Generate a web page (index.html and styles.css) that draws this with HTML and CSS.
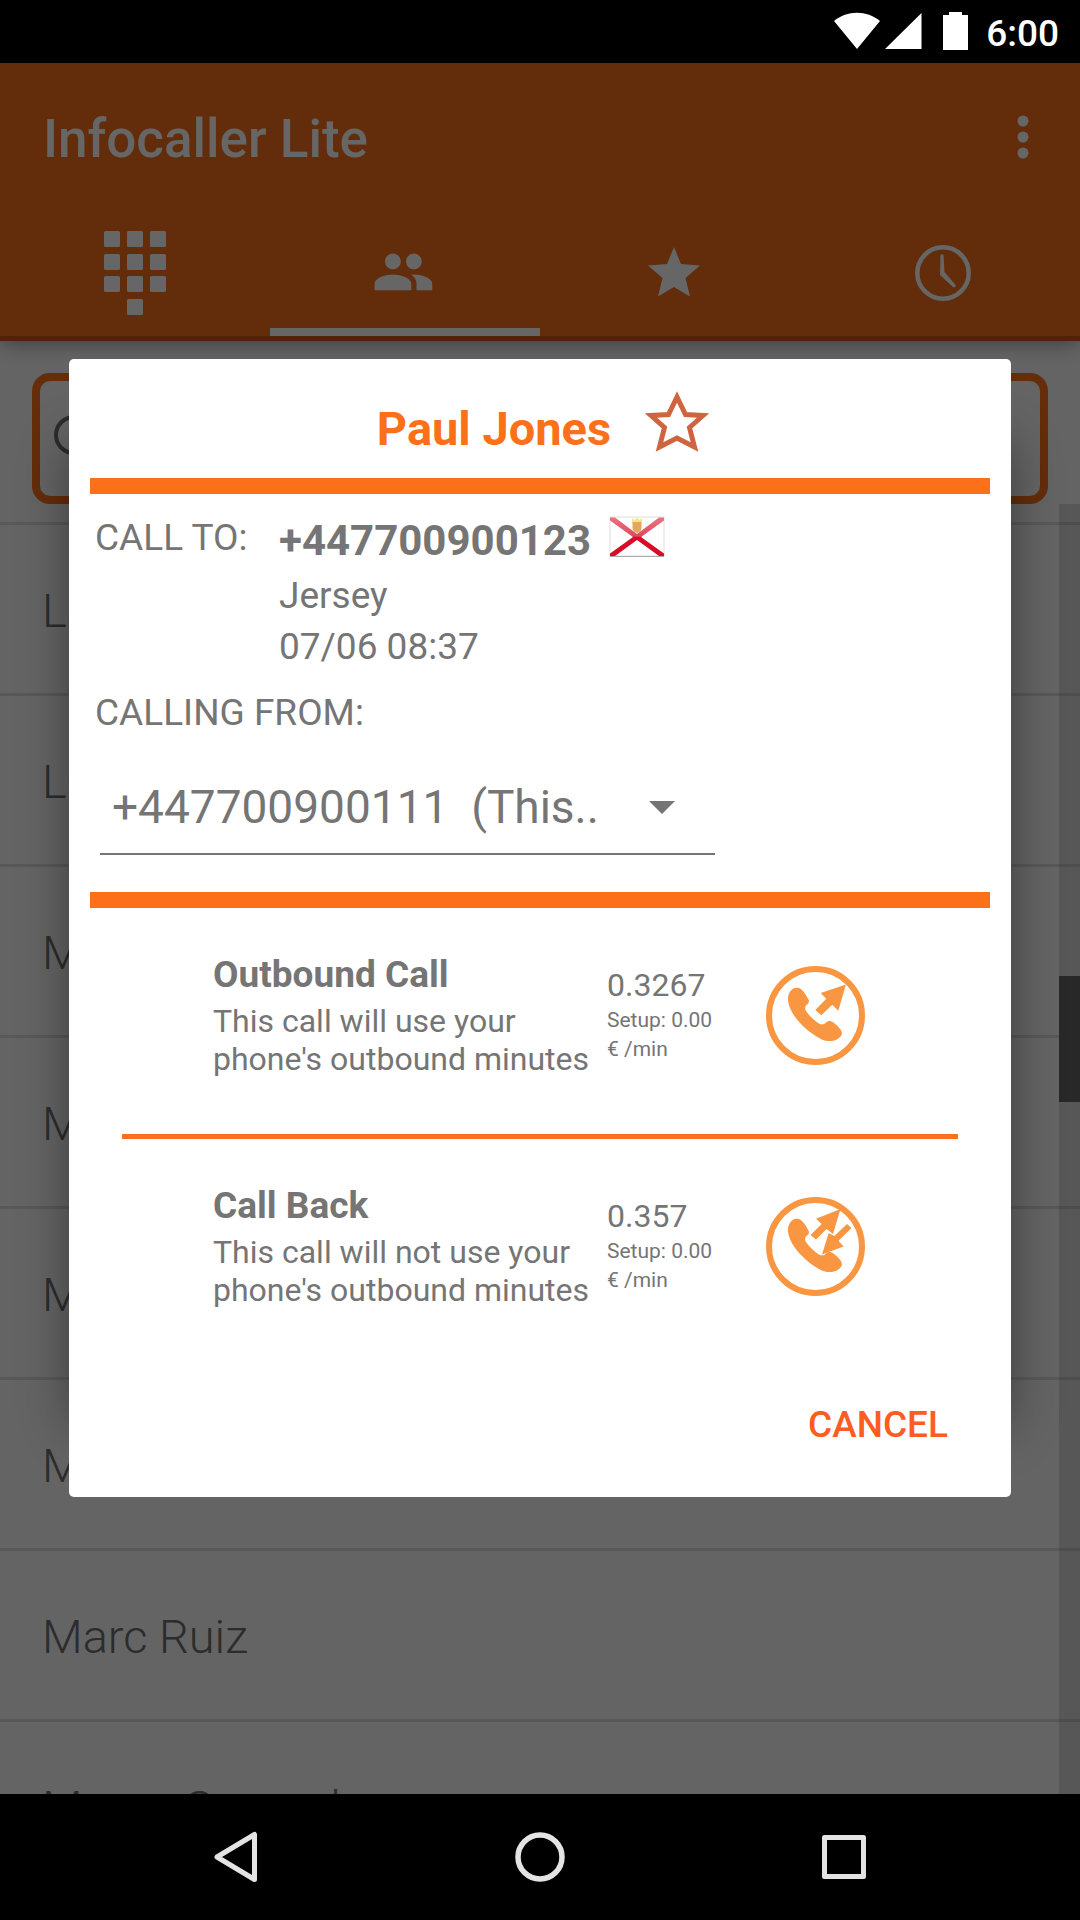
FILE: index.html
```html
<!DOCTYPE html>
<html lang="en">
<head>
<meta charset="utf-8">
<meta name="viewport" content="width=device-width, initial-scale=1">
<title>Infocaller Lite</title>
<link rel="stylesheet" href="styles.css">
</head>
<body>
<div class="screen">
  <div class="status-bar">
    <svg class="status-signal" width="88" height="38" viewBox="0 0 88 38" aria-hidden="true">
      <path fill="#fff" d="M0 9C13-2 33-2 46 9L23 37z M87.500 1V37H51z"/>
    </svg>
    <svg class="status-battery" width="25" height="38" viewBox="0 0 25 38" aria-hidden="true">
      <path fill="#fff" d="M6 0h13v3h6v35H0V3h6z"/>
    </svg>
    <span class="status-time">6:00</span>
  </div>

  <div class="app">
    <header class="app-bar">
      <div class="toolbar">
        <h1 class="app-title">Infocaller Lite</h1>
        <button class="icon-button" type="button" aria-label="More options">
          <svg width="12" height="44" viewBox="0 0 12 44" fill="#fff"><circle cx="6" cy="6" r="5.500"/><circle cx="6" cy="22" r="5.500"/><circle cx="6" cy="38" r="5.500"/></svg>
        </button>
      </div>
      <nav class="tabs">
        <button class="tab" type="button" aria-label="Dialpad">
          <svg width="62" height="84" viewBox="0 0 62 84" fill="#fff">
            <rect width="16" height="16" rx="1.500"/><rect x="23" width="16" height="16" rx="1.500"/><rect x="46" width="16" height="16" rx="1.500"/>
            <rect y="23" width="16" height="16" rx="1.500"/><rect x="23" y="23" width="16" height="16" rx="1.500"/><rect x="46" y="23" width="16" height="16" rx="1.500"/>
            <rect y="45" width="16" height="16" rx="1.500"/><rect x="23" y="45" width="16" height="16" rx="1.500"/><rect x="46" y="45" width="16" height="16" rx="1.500"/>
            <rect x="23" y="68" width="16" height="16" rx="1.500"/>
          </svg>
        </button>
        <button class="tab tab-active" type="button" aria-label="Contacts">
          <svg width="64" height="64" viewBox="0.4 0.2 24.400 24.400" fill="#fff"><path d="M16 11c1.660 0 2.990-1.340 2.990-3S17.660 5 16 5c-1.660 0-3 1.340-3 3s1.340 3 3 3zm-8 0c1.660 0 2.990-1.340 2.990-3S9.660 5 8 5C6.340 5 5 6.340 5 8s1.340 3 3 3zm0 2c-2.330 0-7 1.170-7 3.500V19h14v-2.500c0-2.330-4.670-3.500-7-3.500zm8 0c-.29 0-.62.02-.97.05 1.160.84 1.970 1.970 1.970 3.450V19h6v-2.500c0-2.330-4.670-3.500-7-3.500z"/></svg>
        </button>
        <button class="tab" type="button" aria-label="Favourites">
          <svg width="54" height="52" viewBox="0 0 54 52" fill="#fff"><path d="M26 0l7 17 19 1.500L37.500 31 42 49.500 26 40 10 49.500 14.500 31 0 18.500 19 17z"/></svg>
        </button>
        <button class="tab" type="button" aria-label="Recent calls">
          <svg width="60" height="56" viewBox="0 0 60 56" fill="none" stroke="#fff"><circle cx="28" cy="28" r="25.700" stroke-width="4.500"/><path fill="#fff" stroke="none" d="M25.500 10q1.500-1.500 3 0l1 17L41 40.500q-.5 2-2.500 2L25 30z"/></svg>
        </button>
      </nav>
    </header>

    <main class="contacts">
      <div class="search">
        <svg width="48" height="48" viewBox="0 0 48 48" fill="none" stroke="#6e6e6e" stroke-width="4"><circle cx="22" cy="20" r="18"/><path d="M35 33l12 12"/></svg>
        <input class="search-input" type="search" aria-label="Search contacts">
      </div>
      <div class="list-area">
        <ul class="contact-list">
          <li>Laura Diaz</li>
          <li>Luis Perez</li>
          <li>Maria Sanz</li>
          <li>Manuel Gil</li>
          <li>Marta Vega</li>
          <li>Mario Rey</li>
          <li>Marc Ruiz</li>
          <li>Marco Samuel</li>
        </ul>
        <div class="scroll-track"><div class="scroll-thumb"></div></div>
      </div>
    </main>

    <div class="scrim">
      <div class="dialog-frame">
        <section class="dialog" role="dialog" aria-labelledby="contact-name">
          <header class="dialog-header">
            <h2 class="contact-name" id="contact-name">Paul Jones</h2>
            <button class="icon-button" type="button" aria-label="Add to favourites">
              <svg width="64" height="61" viewBox="0 0 64 61" fill="none" stroke="#ce6540" stroke-width="5"><path d="M32 6L40.500 23.500 58 24.500 44.500 36.500 49.500 56 32 47 14.500 56 19.500 36.500 6 24.500 23.500 23.500z"/></svg>
            </button>
          </header>

          <div class="details">
            <div class="call-to">
              <span class="label">CALL TO:</span>
              <div class="callee">
                <div class="number-row">
                  <strong class="number">+447700900123</strong>
                  <svg width="56" height="42" viewBox="0 0 56 42" role="img" aria-label="Flag of Jersey">
                    <defs><linearGradient id="gloss" x1="0" y1="0" x2="0" y2="1"><stop offset="0" stop-color="#ea7482"/><stop offset=".48" stop-color="#e04a5e"/><stop offset=".52" stop-color="#d80c28"/><stop offset="1" stop-color="#d80c28"/></linearGradient></defs>
                    <rect x="1" y="1" width="54" height="39" fill="#fff" stroke="#ddd"/>
                    <path fill="url(#gloss)" d="M1 1.500h5L28 18 50 1.500h5v3L32 21 55 37.500v2.500h-5L28 24 6 40H1v-2.500L24 21 1 4.500z"/>
                    <path fill="#f7e58a" d="M23 2l2.500 2L28 1.500 30.500 4 33 2v5H23z"/>
                    <path fill="#e3a85c" d="M23.500 6h9v6q0 4-4.500 5-4.500-1-4.500-5z"/>
                    <path stroke="#aaa" d="M1 40.500h54"/>
                  </svg>
                </div>
                <p class="callee-line">Jersey</p>
                <p class="callee-line">07/06 08:37</p>
              </div>
            </div>
            <label class="label label-from" for="calling-from">CALLING FROM:</label>
            <div class="spinner">
              <select class="spinner-select" id="calling-from">
                <option>+447700900111&nbsp; (This..</option>
              </select>
              <svg class="spinner-arrow" width="26" height="13" viewBox="0 0 26 13" aria-hidden="true"><path fill="#757575" d="M0 0h26L13 13z"/></svg>
            </div>
          </div>

          <div class="options">
            <article class="option">
              <div class="option-text">
                <h3 class="option-title">Outbound Call</h3>
                <p class="option-desc">This call will use your phone's outbound minutes</p>
              </div>
              <div class="option-rate">
                <p class="rate">0.3267</p>
                <p class="rate-note">Setup: 0.00</p>
                <p class="rate-note">€ /min</p>
              </div>
              <button class="icon-button" type="button" aria-label="Start outbound call">
                <svg width="99" height="99" viewBox="0 0 99 99" fill="#f89642">
                  <circle cx="49.500" cy="49.500" r="46.500" fill="none" stroke="#f89642" stroke-width="6"/>
                  <path d="M29.700 21.700C25 22.500 21.500 28 22 34.500C23.500 49 40 65 54 72.500C58 75 63 75.500 67 74.800C71 74 75 71.500 76 67.500C75.500 63 71 59.500 67.500 56.500C65 54.500 62 54.200 60 56.500C58.500 58.500 55.500 59 53 57.500C48 54.500 43 49.500 40 45C38.500 42.500 39 40 41 38.500C43 37 43.500 35.500 42.500 33.500C40.500 30 38.500 26.500 35.500 23.500C34 22 32 21.400 29.700 21.700z"/>
                  <path d="M80 18.500L72.300 44.700 66.300 38.700 55.300 49.300 49.300 44 60.300 32.700 54.700 27z"/>
                </svg>
              </button>
            </article>
            <article class="option">
              <div class="option-text">
                <h3 class="option-title">Call Back</h3>
                <p class="option-desc">This call will not use your phone's outbound minutes</p>
              </div>
              <div class="option-rate">
                <p class="rate">0.357</p>
                <p class="rate-note">Setup: 0.00</p>
                <p class="rate-note">€ /min</p>
              </div>
              <button class="icon-button" type="button" aria-label="Request call back">
                <svg width="99" height="99" viewBox="0 0 99 99" fill="#f89642">
                  <circle cx="49.500" cy="49.500" r="46.500" fill="none" stroke="#f89642" stroke-width="6"/>
                  <path d="M29.700 21.700C25 22.500 21.500 28 22 34.500C23.500 49 40 65 54 72.500C58 75 63 75.500 67 74.800C71 74 75 71.500 76 67.500C75.500 63 71 59.500 67.500 56.500C65 54.500 62 54.200 60 56.500C58.500 58.500 55.500 59 53 57.500C48 54.500 43 49.500 40 45C38.500 42.500 39 40 41 38.500C43 37 43.500 35.500 42.500 33.500C40.500 30 38.500 26.500 35.500 23.500C34 22 32 21.400 29.700 21.700z"/>
                  <path d="M74.500 12L67 37 60.500 32 50 42.500 44.500 38 55.700 27 50 21.700z"/>
                  <path d="M81 27L85.500 31 72.500 43.700 77.500 49.500 56 57.500 62.700 36 68.300 39z"/>
                </svg>
              </button>
            </article>
          </div>

          <footer class="dialog-actions">
            <button class="cancel" type="button">CANCEL</button>
          </footer>
        </section>
      </div>
    </div>
  </div>

  <nav class="nav-bar">
    <button class="icon-button" type="button" aria-label="Back">
      <svg width="56" height="56" viewBox="0 0 56 56" fill="none" stroke="#e4e4e4" stroke-width="5" stroke-linejoin="round"><path d="M46.500 5.500v45L9 28z"/></svg>
    </button>
    <button class="icon-button" type="button" aria-label="Home">
      <svg width="56" height="56" viewBox="0 0 56 56" fill="none" stroke="#e4e4e4" stroke-width="5.500"><circle cx="28" cy="28" r="22"/></svg>
    </button>
    <button class="icon-button" type="button" aria-label="Recent apps">
      <svg width="56" height="56" viewBox="0 0 56 56" fill="none" stroke="#e4e4e4" stroke-width="5" stroke-linejoin="round"><path d="M8.500 8.500h39v39h-39z"/></svg>
    </button>
  </nav>
</div>
</body>
</html>
```
FILE: styles.css
```css
:root {
  --orange: #fc7019;
  --grey: #757575;
}

* {
  box-sizing: border-box;
}

body,
h1,
h2,
h3,
p,
ul {
  margin: 0;
}

body {
  font-family: Roboto, "Noto Sans", sans-serif;
  font-weight: 400;
  background: #000;
}

svg {
  display: block;
}

button,
input,
select {
  margin: 0;
  padding: 0;
  border: 0;
  background: none;
  font: inherit;
  color: inherit;
}

.icon-button {
  display: flex;
}

.screen {
  display: grid;
  grid-template-rows: 63px minmax(0, 1fr) 126px;
  height: 100vh;
  overflow: hidden;
}

/* System bars */

.status-bar {
  display: flex;
  align-items: flex-start;
  justify-content: flex-end;
  padding: 12px 21px 0 0;
  color: #fff;
}

.status-battery {
  margin-left: 21px;
}

.status-time {
  margin-left: 18px;
  font-size: 37px;
  line-height: 44px;
  font-weight: 500;
}

.nav-bar {
  display: flex;
  align-items: center;
  justify-content: center;
  gap: 248px;
}

/* App behind the dialog */

.app {
  position: relative;
  display: flex;
  flex-direction: column;
  overflow: hidden;
  background: #fafafa;
}

.app-bar {
  position: relative;
  flex: none;
  border-bottom: 5px solid #c8551a;
  background: #f76e19;
  box-shadow: 0 2px 20px rgba(0, 0, 0, 0.4);
}

.toolbar {
  display: flex;
  align-items: center;
  justify-content: space-between;
  height: 147px;
  padding: 0 51px 0 43px;
  color: #fff;
}

.app-title {
  padding-top: 4px;
  font-size: 53px;
  line-height: 62px;
  font-weight: 500;
}

.tabs {
  display: grid;
  grid-template-columns: repeat(4, 1fr);
  height: 126px;
}

.tab {
  display: flex;
  align-items: center;
  justify-content: center;
  border-top: 8px solid transparent;
  border-bottom: 8px solid transparent;
}

.tab-active {
  border-bottom-color: #fff;
}

.contacts {
  display: flex;
  flex: 1;
  flex-direction: column;
  min-height: 0;
}

.search {
  display: flex;
  flex: none;
  align-items: center;
  height: 131px;
  margin: 32px 32px 0;
  padding: 0 12px;
  border: 8px solid var(--orange);
  border-radius: 18px;
}

.search-input {
  flex: 1;
  font-size: 47px;
}

.list-area {
  display: grid;
  flex: 1;
  min-height: 0;
}

.contact-list {
  grid-area: 1 / 1;
  margin-top: 18px;
  padding: 0;
  list-style: none;
}

.contact-list li {
  height: 171px;
  padding: 58px 42px 0;
  border-top: 3px solid #ddd;
  color: #6e6e6e;
  font-size: 47px;
  line-height: 56px;
  font-weight: 300;
}

.scroll-track {
  grid-area: 1 / 1;
  justify-self: end;
  width: 21px;
  padding-top: 472px;
  background: rgba(0, 0, 0, 0.13);
}

.scroll-thumb {
  height: 126px;
  background: #646464;
}

/* Dialog */

.scrim {
  position: absolute;
  inset: 0;
  display: flex;
  align-items: center;
  padding: 0 69px 2px;
  background: rgba(0, 0, 0, 0.6);
}

.dialog-frame {
  position: relative;
  flex: 1;
}

.dialog-frame::before {
  content: "";
  position: absolute;
  inset: 84px 4px 72px;
  box-shadow: 0 0 48px rgba(0, 0, 0, 0.45);
}

.dialog {
  position: relative;
  padding: 0 21px;
  border-radius: 5px;
  background: #fff;
  color: var(--grey);
}

.dialog-header {
  display: flex;
  align-items: flex-start;
  justify-content: center;
  gap: 34px;
  height: 135px;
  padding: 32px 0 0 6px;
  border-bottom: 16px solid var(--orange);
}

.contact-name {
  color: var(--orange);
  font-size: 47px;
  line-height: 76px;
  font-weight: 700;
}

.details {
  padding: 22px 5px 37px;
  border-bottom: 16px solid var(--orange);
}

.call-to {
  display: grid;
  grid-template-columns: 184px 1fr;
}

.label,
.callee-line {
  font-size: 37px;
}

.label {
  line-height: 44px;
}

.label-from {
  display: block;
  margin-top: 19px;
}

.number-row {
  display: flex;
  align-items: flex-start;
  gap: 18px;
  height: 54px;
}

.number {
  font-size: 42px;
  line-height: 50px;
  font-weight: 700;
}

.callee-line {
  line-height: 51px;
}

.spinner {
  display: grid;
  align-items: center;
  width: 615px;
  margin: 26px 0 0 5px;
}

.spinner-select {
  grid-area: 1 / 1;
  height: 94px;
  padding: 0 80px 0 12px;
  appearance: none;
  border-bottom: 2px solid var(--grey);
  border-radius: 0;
  font-size: 46px;
}

.spinner-arrow {
  grid-area: 1 / 1;
  justify-self: end;
  margin-right: 40px;
  pointer-events: none;
}

.option {
  display: grid;
  grid-template-columns: 394px 159px 101px;
  align-items: center;
  justify-content: center;
  margin: 0 32px;
  padding: 45px 0 56px;
}

.option + .option {
  border-top: 5px solid var(--orange);
}

.option-title {
  margin-bottom: 5px;
  font-size: 37px;
  line-height: 44px;
  font-weight: 700;
}

.option-desc,
.rate {
  font-size: 32px;
  line-height: 38px;
}

.rate {
  margin-bottom: 2px;
}

.rate-note {
  font-size: 21px;
  line-height: 29px;
}

.dialog-actions {
  display: flex;
  justify-content: flex-end;
  padding: 38px 42px 50px;
}

.cancel {
  color: #fd5c22;
  font-size: 37px;
  line-height: 44px;
  font-weight: 500;
}
```
